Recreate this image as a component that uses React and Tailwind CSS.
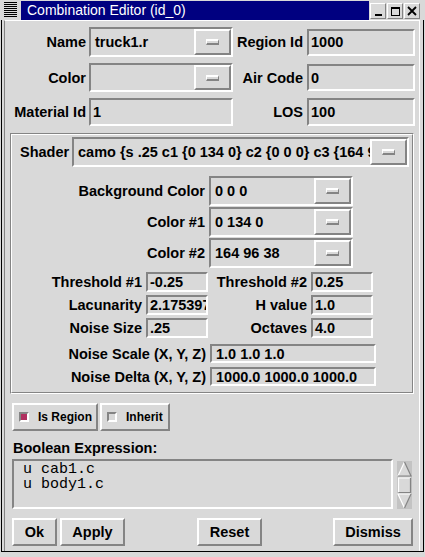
import React from 'react';

const sunken = 'border-2 border-t-[#848484] border-l-[#848484] border-b-white border-r-white';
const raised = 'border-2 border-t-white border-l-white border-b-[#848484] border-r-[#848484]';

const Indicator = () => (
  <span className="block w-[13px] h-[6px] border-t-2 border-b-2 border-l border-r border-t-white border-l-white border-b-[#848484] border-r-[#848484]" />
);

const Combo = ({ value, className = '' }) => (
  <div className={`flex ${sunken} ${className}`}>
    <div className="flex-1 flex items-center pl-[4px] overflow-hidden whitespace-nowrap">{value}</div>
    <div className={`w-[37px] shrink-0 flex items-center justify-center ${raised}`}>
      <Indicator />
    </div>
  </div>
);

const Entry = ({ value, className = '' }) => (
  <div className={`flex items-center pl-[2px] overflow-hidden whitespace-nowrap ${sunken} ${className}`}>{value}</div>
);

const Check = ({ label, on, className = '' }) => (
  <div className={`flex items-center pl-[5px] h-[28px] whitespace-nowrap text-[12px] ${raised} ${className}`}>
    <span
      className={`block shrink-0 w-[10px] h-[10px] border-2 border-t-[#848484] border-l-[#848484] border-b-white border-r-white ${
        on ? 'bg-[#b03060]' : 'bg-[#d9d9d9]'
      }`}
    />
    <span className="ml-[9px]">{label}</span>
  </div>
);

const Button = ({ label, className = '' }) => (
  <div className={`flex items-center justify-center h-[28px] ${raised} ${className}`}>{label}</div>
);

const TitleBar = () => (
  <div className="h-[20px] flex shrink-0">
    {/* window menu icon */}
    <div className="w-[21px] h-[20px] flex items-center justify-center">
      <svg width="15" height="18" viewBox="0 0 15 18">
        <rect x="0" y="0" width="15" height="18" fill="#d9d9d9" />
        {[1, 3, 5, 7, 9, 11, 13, 15].map((y) => (
          <rect key={y} x="1" y={y} width="13" height="1" fill="#000" />
        ))}
      </svg>
    </div>
    <div className="w-[348px] h-[19px] mt-[1px] bg-[#000080] text-white font-normal text-[14px] leading-[19px] pl-[6px] whitespace-nowrap">
      Combination Editor (id_0)
    </div>
    <div className="flex ml-[1px] mt-[3px] gap-[1px]">
      <div className="w-[16px] h-[16px] border border-t-white border-l-white border-b-[#848484] border-r-[#848484] flex items-end justify-center pb-[2px]">
        <span className="block w-[7px] h-[2px] bg-black" />
      </div>
      <div className="w-[16px] h-[16px] border border-t-white border-l-white border-b-[#848484] border-r-[#848484] flex items-center justify-center">
        <span className="block w-[9px] h-[9px] border border-black border-t-2" />
      </div>
      <div className="w-[16px] h-[16px] border border-t-white border-l-white border-b-[#848484] border-r-[#848484] flex items-center justify-center">
        <svg width="10" height="10" viewBox="0 0 10 10">
          <path d="M1 1 L9 9 M9 1 L1 9" stroke="#000" strokeWidth="1.8" />
        </svg>
      </div>
    </div>
  </div>
);

const Scrollbar = () => (
  <svg width="15" height="48" viewBox="0 0 15 48" className="ml-[4px] mt-[2px]">
    <rect x="0" y="0" width="15" height="48" fill="#c3c3c3" />
    {/* up arrow */}
    <polygon points="7.5,1 14,15 1,15" fill="#d9d9d9" />
    <path d="M1 15 L7.5 1" stroke="#fff" strokeWidth="1.2" fill="none" />
    <path d="M7.5 1 L14 15 L1 15" stroke="#848484" strokeWidth="1.2" fill="none" />
    {/* slider */}
    <rect x="1" y="16.5" width="13" height="15" fill="#d9d9d9" />
    <path d="M1.5 31 L1.5 17 L13.5 17" stroke="#fff" strokeWidth="1.2" fill="none" />
    <path d="M13.5 17 L13.5 31.5 L1.5 31.5" stroke="#848484" strokeWidth="1.2" fill="none" />
    {/* down arrow */}
    <polygon points="1,33 14,33 7.5,47" fill="#d9d9d9" />
    <path d="M7.5 47 L1 33 L14 33" stroke="#fff" strokeWidth="1.2" fill="none" />
    <path d="M14 33 L7.5 47" stroke="#848484" strokeWidth="1.2" fill="none" />
  </svg>
);

export default function App() {
  return (
    <div className="w-[425px] h-[557px] bg-[#d9d9d9] flex flex-col overflow-hidden text-black font-['Liberation_Sans',Arial,sans-serif] text-[14.5px] font-bold leading-[16px]">
      <TitleBar />

      <div className="flex-1 flex pl-[1px] pr-[1px] pb-[5px]">
        <div className="flex-1 flex border-l border-r border-b border-black pl-[2px] pr-[3px]">
          <div className="flex-1 flex flex-col border-l border-t border-l-[#848484] border-t-white border-r border-r-white">
            {/* top fields */}
            <div className="flex items-center h-[30px] mt-[6px]">
              <div className="w-[81px] text-right whitespace-nowrap">Name</div>
              <Combo value="truck1.r" className="ml-[3px] w-[144px] h-[30px]" />
              <div className="w-[70px] text-right whitespace-nowrap">Region Id</div>
              <Entry value="1000" className="ml-[4px] w-[108px] h-[27px]" />
            </div>
            <div className="flex items-center h-[29px] mt-[6px]">
              <div className="w-[81px] text-right whitespace-nowrap">Color</div>
              <Combo value="" className="ml-[3px] w-[144px] h-[29px]" />
              <div className="w-[70px] text-right whitespace-nowrap">Air Code</div>
              <Entry value="0" className="ml-[4px] w-[108px] h-[27px]" />
            </div>
            <div className="flex items-center h-[28px] mt-[6px]">
              <div className="w-[81px] text-right whitespace-nowrap">Material Id</div>
              <Entry value="1" className="ml-[3px] w-[144px] h-[28px]" />
              <div className="w-[70px] text-right whitespace-nowrap">LOS</div>
              <Entry value="100" className="ml-[4px] w-[108px] h-[28px]" />
            </div>

            {/* shader frame (groove) */}
            <div className="mt-[7px] ml-[5px] w-[404px] h-[261px] border border-t-[#848484] border-l-[#848484] border-b-white border-r-white">
              <div className="h-full border border-t-white border-l-white border-b-[#848484] border-r-[#848484] flex flex-col">
                <div className="flex items-center h-[30px] mt-[2px] pl-[8px]">
                  <div className="w-[48px] whitespace-nowrap">Shader</div>
                  <Combo
                    value="camo {s .25 c1 {0 134 0} c2 {0 0 0} c3 {164 96 38}}"
                    className="ml-[4px] w-[337px] h-[30px]"
                  />
                </div>

                <div className="flex flex-col gap-[1px] mt-[9px]">
                  {[
                    ['Background Color', '0 0 0'],
                    ['Color #1', '0 134 0'],
                    ['Color #2', '164 96 38'],
                  ].map(([label, value]) => (
                    <div key={label} className="flex items-center h-[30px]">
                      <div className="w-[193px] text-right">{label}</div>
                      <Combo value={value} className="ml-[4px] w-[144px] h-[30px]" />
                    </div>
                  ))}
                </div>

                {[
                  ['Threshold #1', '-0.25', 'Threshold #2', '0.25', 'mt-[4px]'],
                  ['Lacunarity', '2.1753974', 'H value', '1.0', 'mt-[3px]'],
                  ['Noise Size', '.25', 'Octaves', '4.0', 'mt-[3px]'],
                ].map(([l1, v1, l2, v2, mt]) => (
                  <div key={l1} className={`flex items-center h-[20px] ${mt}`}>
                    <div className="w-[130px] text-right">{l1}</div>
                    <Entry value={v1} className="ml-[4px] w-[62px] h-[20px]" />
                    <div className="w-[99px] text-right">{l2}</div>
                    <Entry value={v2} className="ml-[4px] w-[62px] h-[20px]" />
                  </div>
                ))}

                <div className="flex items-center h-[19px] mt-[6px]">
                  <div className="w-[194px] text-right whitespace-nowrap">Noise Scale (X, Y, Z)</div>
                  <Entry value="1.0 1.0 1.0" className="ml-[4px] w-[166px] h-[19px] pl-[4px]" />
                </div>
                <div className="flex items-center h-[19px] mt-[4px]">
                  <div className="w-[194px] text-right whitespace-nowrap">Noise Delta (X, Y, Z)</div>
                  <Entry value="1000.0 1000.0 1000.0" className="ml-[4px] w-[166px] h-[19px] pl-[4px]" />
                </div>
              </div>
            </div>

            {/* check buttons */}
            <div className="flex mt-[9px] ml-[7px]">
              <Check label="Is Region" on className="w-[86px]" />
              <Check label="Inherit" className="ml-[2px] w-[70px]" />
            </div>

            <div className="mt-[9px] ml-[8px] h-[16px]">Boolean Expression:</div>

            <div className="flex mt-[3px] ml-[7px]">
              <div
                className={`w-[381px] h-[50px] ${sunken} pl-[9px] pt-[1px] font-['Liberation_Mono','Courier_New',monospace] font-normal text-[15px] leading-[15px] whitespace-pre`}
              >
                {'u cab1.c\nu body1.c'}
              </div>
              <Scrollbar />
            </div>

            <div className="flex mt-[9px] ml-[7px]">
              <Button label="Ok" className="w-[45px]" />
              <Button label="Apply" className="ml-[3px] w-[65px]" />
              <Button label="Reset" className="ml-[72px] w-[65px]" />
              <Button label="Dismiss" className="ml-[71px] w-[80px]" />
            </div>
          </div>
        </div>
      </div>
    </div>
  );
}
